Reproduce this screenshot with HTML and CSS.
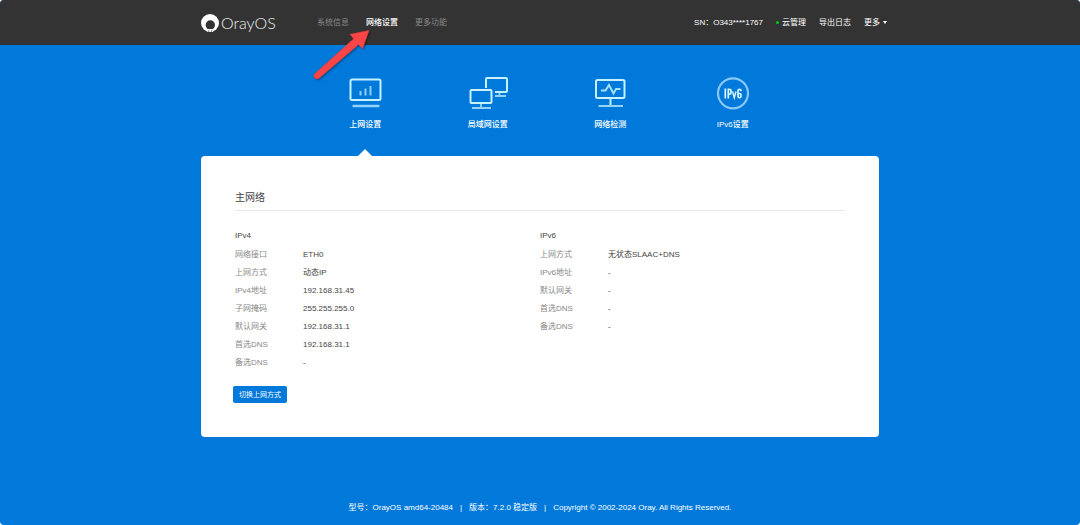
FILE: index.html
```html
<!DOCTYPE html>
<html lang="zh-CN">
<head>
<meta charset="utf-8">
<meta name="viewport" content="width=device-width, initial-scale=1">
<title>OrayOS</title>
<link rel="stylesheet" href="styles.css">
</head>
<body>
<div class="page">
  <header class="topbar">
    <div class="container topbar-inner">
      <a class="brand" href="#">
        <svg class="brand-mark" viewBox="0 0 18 18" aria-hidden="true">
          <circle cx="9" cy="9" r="9" fill="#fff"/>
          <circle cx="9.300" cy="11" r="4.700" fill="#333"/>
          <path d="M6 15.600q3.300-1.400 6.600 0L12 18H6.600z" fill="#fff"/>
          <path d="M7.800 16.200V18M10.600 16.200V18" stroke="#333" stroke-width=".7"/>
        </svg>
        <span class="brand-name">OrayOS</span>
      </a>
      <nav class="main-nav">
        <a href="#">系统信息</a>
        <a class="active" href="#">网络设置</a>
        <a href="#">更多功能</a>
      </nav>
      <div class="tools">
        <span>SN：O343****1767</span>
        <a class="cloud" href="#">云管理</a>
        <a href="#">导出日志</a>
        <button class="more" type="button">更多</button>
      </div>
    </div>
    <svg class="pointer" viewBox="0 0 64 54" aria-hidden="true">
      <path d="M59 2.500 40 6.300 43.600 10.800 5 45.500A3 3 0 0 0 9 50.200L48.700 16.400 52.500 20.800Z" fill="#fb4546" stroke="#dc3c3e" stroke-width=".6"/>
    </svg>
  </header>

  <main class="container main">
    <nav class="tabs">
      <a class="tab current" href="#">
        <svg class="tab-icon" viewBox="0 0 40 34" fill="none" stroke="#c4f2ff" aria-hidden="true">
          <rect x="5.500" y="3.500" width="30" height="20.500" rx="1.500" stroke-width="2"/>
          <path d="M8.500 30h25" stroke-width="2.400" stroke-linecap="round" opacity=".75"/>
          <path d="M15.500 15v4.500M20.500 12.500v7M25.500 10v9.500" stroke-width="2" opacity=".7"/>
        </svg>
        <span>上网设置</span>
      </a>
      <a class="tab" href="#">
        <svg class="tab-icon" viewBox="0 0 40 34" fill="none" stroke="#c4f2ff" aria-hidden="true">
          <path d="M18 12V3a1 1 0 0 1 1-1h19a1 1 0 0 1 1 1v12a1 1 0 0 1-1 1H27" stroke-width="2"/>
          <rect x="2.500" y="14" width="21" height="13" rx="1" stroke-width="2"/>
          <path d="M13 28v3.500M4 32h19M31.500 17v2M27 20h11" stroke-width="1.800" opacity=".75"/>
        </svg>
        <span>局域网设置</span>
      </a>
      <a class="tab" href="#">
        <svg class="tab-icon" viewBox="0 0 40 34" fill="none" stroke="#c4f2ff" aria-hidden="true">
          <rect x="6" y="4" width="28.500" height="18" rx="1.500" stroke-width="2"/>
          <path d="M20.500 23v6" stroke-width="2"/>
          <path d="M8.500 30h24.500" stroke-width="2" opacity=".75"/>
          <path d="M11 14.500h4.500L19 9l4.500 8.500 2.500-4.500h4.500" stroke-width="1.900" opacity=".85"/>
        </svg>
        <span>网络检测</span>
      </a>
      <a class="tab" href="#">
        <svg class="tab-icon" viewBox="0 0 40 34" fill="none" aria-hidden="true">
          <circle cx="20" cy="17.300" r="15" stroke="#8ac9f5" stroke-width="2.200"/>
          <g stroke="#d8f6ff" stroke-width="1.700">
            <path d="M12.300 12.500v10M15.300 22.500V13.300h1.200q1.500 0 1.500 1.400v2.100q0 1.400-1.500 1.400h-1.200"/>
            <path d="M19.600 15.500l1.700 6.300 1.700-6.300" stroke-width="1.400"/>
            <path d="M28 15.300v-.6q0-1.400-1.500-1.400T25 14.700v5.600q0 1.400 1.500 1.400t1.500-1.400v-1.400q0-1.400-1.500-1.400T25 18.700"/>
          </g>
        </svg>
        <span>IPv6设置</span>
      </a>
    </nav>

    <section class="card">
      <h1 class="card-title">主网络</h1>
      <div class="columns">
        <section>
          <h2 class="group-title">IPv4</h2>
          <dl class="facts">
            <dt>网络接口</dt><dd>ETH0</dd>
            <dt>上网方式</dt><dd>动态IP</dd>
            <dt>IPv4地址</dt><dd>192.168.31.45</dd>
            <dt>子网掩码</dt><dd>255.255.255.0</dd>
            <dt>默认网关</dt><dd>192.168.31.1</dd>
            <dt>首选DNS</dt><dd>192.168.31.1</dd>
            <dt>备选DNS</dt><dd>-</dd>
          </dl>
        </section>
        <section>
          <h2 class="group-title">IPv6</h2>
          <dl class="facts">
            <dt>上网方式</dt><dd>无状态SLAAC+DNS</dd>
            <dt>IPv6地址</dt><dd>-</dd>
            <dt>默认网关</dt><dd>-</dd>
            <dt>首选DNS</dt><dd>-</dd>
            <dt>备选DNS</dt><dd>-</dd>
          </dl>
        </section>
      </div>
      <button class="switch" type="button">切换上网方式</button>
    </section>
  </main>

  <footer class="footer">
    <span>型号：OrayOS amd64-20484</span>
    <span>|</span>
    <span>版本：7.2.0 稳定版</span>
    <span>|</span>
    <span>Copyright © 2002-2024 Oray. All Rights Reserved.</span>
  </footer>
</div>
</body>
</html>
```

FILE: styles.css
```css
* {
  box-sizing: border-box;
}

body {
  margin: 0;
  background: #fff;
  color: #444;
  font: 8px/18px "Liberation Sans", "Noto Sans CJK SC", sans-serif;
}

a {
  color: inherit;
  text-decoration: none;
}

button {
  border: 0;
  font: inherit;
  cursor: pointer;
}

.page {
  display: flex;
  flex-direction: column;
  min-height: 100vh;
  overflow: hidden;
  border-radius: 4px;
  background: #0079db;
}

.container {
  width: 100%;
  max-width: 678px;
  margin: 0 auto;
}

.topbar {
  position: relative;
  background: #333;
}

.topbar-inner {
  display: flex;
  align-items: center;
  height: 45px;
}

.brand {
  display: flex;
  align-items: center;
  gap: 2px;
  width: 116px;
  color: #eee;
}

.brand-mark {
  width: 18px;
  height: 18px;
}

.brand-name {
  font: 300 16px/18px Lato, sans-serif;
}

.main-nav {
  display: flex;
  gap: 17px;
  color: #888;
}

.main-nav .active {
  color: #fff;
  font-weight: 500;
}

.tools {
  display: flex;
  align-items: center;
  gap: 13px;
  margin-left: auto;
  margin-right: -8px;
  color: #fff;
}

.cloud::before {
  content: "";
  display: inline-block;
  width: 3px;
  height: 3px;
  margin-right: 3px;
  border-radius: 50%;
  background: #0c0;
  vertical-align: middle;
}

.more {
  display: flex;
  align-items: center;
  gap: 3px;
  padding: 0;
  background: none;
  color: inherit;
}

.more::after {
  content: "";
  border: solid transparent;
  border-width: 3px 2px 0;
  border-top-color: #fff;
}

.pointer {
  position: absolute;
  top: 28px;
  left: calc(50% - 230px);
  z-index: 1;
  width: 64px;
  height: 54px;
  filter: drop-shadow(1px 1px 1px rgba(0, 0, 0, 0.4));
}

.main {
  flex: 1;
}

.tabs {
  display: flex;
  padding: 31px 85px 0 103px;
  color: #fff;
}

.tab {
  position: relative;
  display: flex;
  flex: 1;
  flex-direction: column;
  align-items: center;
  gap: 6px;
  height: 80px;
  font-weight: 500;
}

.tab-icon {
  width: 40px;
  height: 34px;
}

.current::after {
  content: "";
  position: absolute;
  bottom: 0;
  border: solid transparent;
  border-width: 0 7px 7px;
  border-bottom-color: #fff;
}

.card {
  padding: 33px 34px;
  border-radius: 4px;
  background: #fff;
}

.card-title {
  margin: 0 0 16px;
  padding-bottom: 3px;
  border-bottom: 1px solid #e6e6e6;
  font-size: 10px;
  font-weight: 400;
}

.columns {
  display: grid;
  grid-template-columns: 1fr 1fr;
}

.group-title {
  margin: 0 0 1px;
  font-size: 8px;
  font-weight: 400;
}

.facts {
  display: grid;
  grid-template-columns: 68px 1fr;
  margin: 0;
}

.facts dt {
  color: #888;
}

.facts dd {
  margin: 0;
}

.switch {
  margin: 14px 0 0 -2px;
  padding: 0 6px;
  border-radius: 2px;
  background: #0079db;
  color: #fff;
  font-size: 7px;
  line-height: 17px;
}

.footer {
  display: flex;
  flex-wrap: wrap;
  justify-content: center;
  gap: 0 7px;
  padding: 0 16px 8px;
  color: #fff;
}
```
